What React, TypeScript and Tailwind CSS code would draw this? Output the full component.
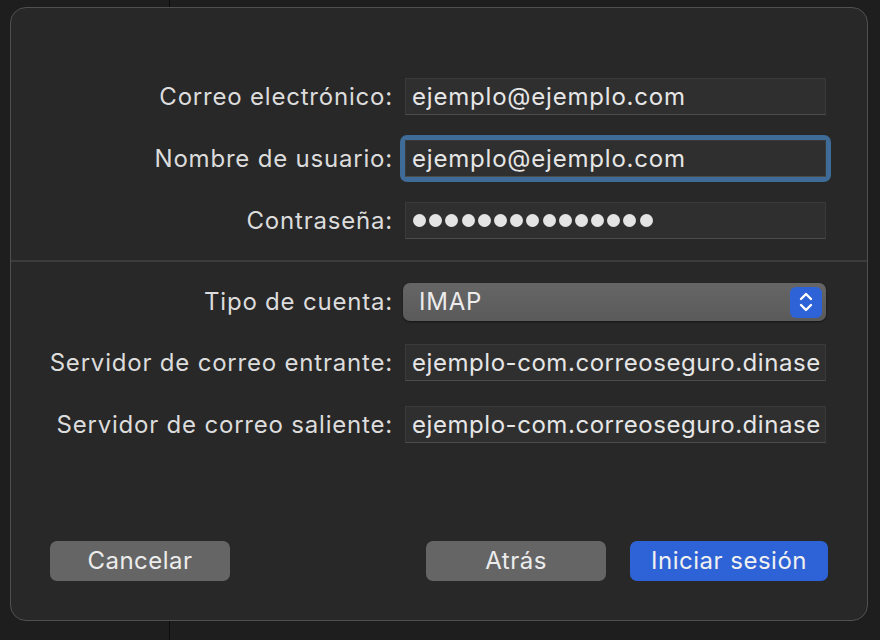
import React from 'react';

const font = { fontFamily: 'Inter, "Noto Sans", sans-serif' };

function Field({ label, value, focused, tight }: { label: string; value: React.ReactNode; focused?: boolean; tight?: boolean }) {
  return (
    <div className="flex items-center h-[37px]">
      <div className="w-[382px] text-right text-[24px] text-[#dcdcdc] tracking-[0.8px]">{label}</div>
      <div className="ml-[12px] w-[421px] h-[37px] relative">
        {focused && (
          <div className="absolute -inset-[5px] rounded-[7px] bg-[#3e6b97]" />
        )}
        <div
          className={
            'relative h-full bg-[#2f2f2f] border border-[#3a3a3a] border-b-[#4c4c4c] flex items-center px-[6px] overflow-hidden whitespace-nowrap text-[24px] text-[#e6e6e6] ' +
            (tight ? 'tracking-[0.55px]' : 'tracking-[0.8px]')
          }
        >
          {value}
        </div>
      </div>
    </div>
  );
}

function Dots({ n }: { n: number }) {
  return (
    <div className="flex gap-[3.2px] pl-[1px]">
      {Array.from({ length: n }).map((_, i) => (
        <span key={i} className="w-[13px] h-[13px] rounded-full bg-[#e4e4e4]" />
      ))}
    </div>
  );
}

export default function App() {
  return (
    <div className="relative w-[880px] h-[640px] bg-[#1e1e1e] overflow-hidden" style={font}>
      {/* background window */}
      <div className="flex h-full">
        <div className="w-[170px] h-full border-r border-[#0c0c0c]" />
        <div className="flex-1" />
      </div>

      {/* sheet */}
      <div className="absolute left-[10px] top-[7px] w-[858px] h-[614px] rounded-[16px] bg-[#282828] border border-[#505050] flex flex-col">
        <div className="mt-[70px] flex flex-col gap-[25px]">
          <Field label="Correo electrónico:" value="ejemplo@ejemplo.com" />
          <Field label="Nombre de usuario:" value="ejemplo@ejemplo.com" focused />
          <Field label="Contraseña:" value={<Dots n={15} />} />
        </div>

        <div className="mt-[21px] h-[2px] bg-[#3c3c3c]" />

        <div className="mt-[21px] flex items-center h-[38px]">
          <div className="w-[382px] text-right text-[24px] text-[#dcdcdc] tracking-[0.8px]">Tipo de cuenta:</div>
          <div className="ml-[10px] w-[423px] h-[38px] rounded-[7px] bg-gradient-to-b from-[#666666] to-[#5a5a5a] shadow-[0_1px_2px_rgba(0,0,0,0.5)] flex items-center justify-between pl-[16px] pr-[4px]">
            <span className="text-[24px] text-[#ececec] tracking-[0.8px]">IMAP</span>
            <div className="w-[32px] h-[31px] rounded-[6px] bg-[#2d63d6] flex items-center justify-center">
              <svg width="14" height="22" viewBox="0 0 14 22" fill="none" stroke="#ffffff" strokeWidth="2.4" strokeLinecap="round" strokeLinejoin="round">
                <path d="M2 8 L7 3 L12 8" />
                <path d="M2 14 L7 19 L12 14" />
              </svg>
            </div>
          </div>
        </div>

        <div className="mt-[23px] flex flex-col gap-[25px]">
          <Field label="Servidor de correo entrante:" value="ejemplo-com.correoseguro.dinase" tight />
          <Field label="Servidor de correo saliente:" value="ejemplo-com.correoseguro.dinase" tight />
        </div>

        <div className="mt-[98px] flex items-center px-[39px]">
          <button className="w-[180px] h-[40px] rounded-[7px] bg-[#656565] text-[24px] text-[#ececec] tracking-[0.5px]">Cancelar</button>
          <div className="flex-1" />
          <button className="w-[180px] h-[40px] rounded-[7px] bg-[#656565] text-[24px] text-[#ececec] tracking-[0.5px]">Atrás</button>
          <button className="ml-[24px] w-[198px] h-[40px] rounded-[7px] bg-[#2d63d6] text-[24px] text-[#f0f0f0] tracking-[0.5px]">Iniciar sesión</button>
        </div>
      </div>
    </div>
  );
}
